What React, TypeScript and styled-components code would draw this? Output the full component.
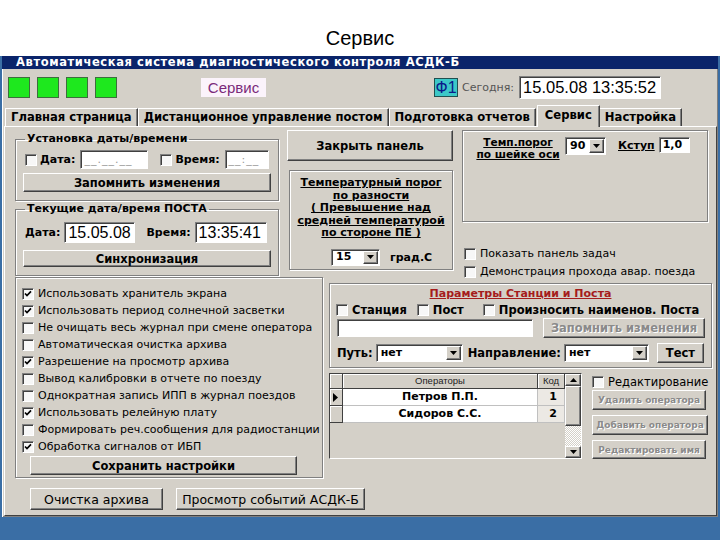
import React from 'react';
import styled, { createGlobalStyle, css } from 'styled-components';

const GlobalStyle = createGlobalStyle`
  html, body { margin: 0; padding: 0; background: #fff; }
  body { font-family: "DejaVu Sans", Verdana, sans-serif; }
  * { box-sizing: border-box; }
`;

const face = '#d4d0c8';

const raised = css`
  border: 1px solid;
  border-color: #ffffff #404040 #404040 #ffffff;
  box-shadow: inset -1px -1px 0 #808080;
`;

const sunken = css`
  border: 1px solid;
  border-color: #808080 #ffffff #ffffff #808080;
  box-shadow: inset 1px 1px 0 #404040;
`;

const etched = css`
  border: 1px solid #808080;
  box-shadow: inset 1px 1px 0 #ffffff, 1px 1px 0 #ffffff;
`;

const Page = styled.div`
  width: 720px;
  height: 540px;
  overflow: hidden;
  display: flex;
  flex-direction: column;
`;

const SlideTitle = styled.h1`
  margin: 0;
  height: 56px;
  padding-top: 27px;
  text-align: center;
  font: 400 20px/22px "Liberation Sans", Arial, sans-serif;
  color: #000;
`;

const Desktop = styled.div`
  flex: 1;
  background: #3a6ea5;
  padding: 0 2px;
`;

const Window = styled.div`
  height: 461px;
  background: ${face};
  display: flex;
  flex-direction: column;
  box-shadow: inset 1px 0 0 #ffffff, inset -1px -1px 0 #808080;
`;

const TitleBar = styled.div`
  height: 13px;
  background: #0a246a;
  color: #fff;
  font-weight: bold;
  font-size: 11.5px;
  letter-spacing: 0.6px;
  line-height: 13px;
  padding-left: 14px;
  white-space: nowrap;
  overflow: hidden;
`;

const Toolbar = styled.div`
  height: 37px;
  display: flex;
  align-items: center;
  padding-left: 6px;
`;

const Lamp = styled.div`
  width: 22px;
  height: 21px;
  margin-right: 7px;
  background: #1ee81e;
  border: 1px solid #3d6e3d;
`;

const ModeLabel = styled.div`
  margin-left: 77px;
  width: 65px;
  height: 19px;
  background: #fbf3fb;
  color: #7a2a7a;
  font: 15px/19px "Liberation Sans", Arial, sans-serif;
  text-align: center;
`;

const FKey = styled.div`
  margin-left: 168px;
  width: 24px;
  height: 19px;
  background: #3cc8c8;
  border: 1px solid #205050;
  color: #0a1a8a;
  font: 16px/17px "Liberation Sans", Arial, sans-serif;
  text-align: center;
`;

const TodayLabel = styled.span`
  margin-left: 4px;
  color: #555;
  font-size: 11px;
`;

const Clock = styled.div`
  margin-left: 5px;
  width: 142px;
  height: 23px;
  background: #fff;
  ${sunken};
  font: 16.5px/21px "Liberation Sans", Arial, sans-serif;
  padding-left: 3px;
`;

const TabStrip = styled.div`
  height: 20px;
  display: flex;
  align-items: flex-end;
  padding-left: 3px;
`;

const Tab = styled.div<{ $active?: boolean }>`
  height: 18px;
  padding: 0 5px;
  font-weight: bold;
  font-size: 11.6px;
  line-height: 17px;
  white-space: nowrap;
  background: ${face};
  border-top: 1px solid #fff;
  border-left: 1px solid #fff;
  border-right: 1px solid #404040;
  box-shadow: inset -1px 0 0 #808080;
  position: relative;
  ${p => p.$active && css`
    margin: 0 -1px -1px 1px;
    padding: 1px 7px 0;
    z-index: 1;
    height: 22px;
  `}
`;

const TabPanel = styled.div`
  flex: 1;
  margin: 0 1px 1px 2px;
  border: 1px solid;
  border-color: #ffffff #404040 #404040 #ffffff;
  padding: 3px 0 0 10px;
  display: flex;
  flex-direction: column;
`;

const Row = styled.div<{ $h?: number; $mt?: number }>`
  display: flex;
  ${p => p.$h && `height: ${p.$h}px;`}
  margin-top: ${p => p.$mt || 0}px;
`;

const Column = styled.div<{ $w: number; $ml?: number; $mt?: number }>`
  width: ${p => p.$w}px;
  margin-left: ${p => p.$ml || 0}px;
  margin-top: ${p => p.$mt || 0}px;
  display: flex;
  flex-direction: column;
  flex-shrink: 0;
`;

const Group = styled.fieldset<{ $mt: number }>`
  margin: ${p => p.$mt}px 0 0 0;
  min-width: 0;
  padding: 2px 7px 8px;
  ${etched};
`;

const Legend = styled.legend`
  padding: 0 2px;
  margin-left: 2px;
  font-weight: bold;
  font-size: 11px;
  line-height: 12px;
`;

const FieldRow = styled.div<{ $h: number; $mt: number }>`
  display: flex;
  align-items: center;
  height: ${p => p.$h}px;
  margin-top: ${p => p.$mt}px;
`;

const Label = styled.span<{ $ml?: number; $u?: boolean; $size?: number; $mt?: number }>`
  margin-left: ${p => p.$ml || 0}px;
  margin-top: ${p => p.$mt || 0}px;
  font-weight: bold;
  font-size: ${p => p.$size || 11}px;
  white-space: nowrap;
  ${p => p.$u && 'text-decoration: underline;'}
`;

const Field = styled.div<{ $w: number; $h: number; $ml?: number; $big?: boolean }>`
  width: ${p => p.$w}px;
  height: ${p => p.$h}px;
  margin-left: ${p => p.$ml || 0}px;
  flex-shrink: 0;
  background: #fff;
  ${sunken};
  padding-left: 3px;
  white-space: nowrap;
  overflow: hidden;
  ${p => p.$big
    ? css`font: 16px/${p.$h - 2}px "Liberation Sans", Arial, sans-serif;`
    : css`font-weight: bold; font-size: 11px; line-height: ${p.$h - 2}px;`}
`;

const Mask = styled.span`
  color: #9a9a9a;
  font-weight: normal;
  letter-spacing: 1px;
`;

const Btn = styled.div<{ $w?: number; $h: number; $mt?: number; $ml?: number; $disabled?: boolean; $size?: number; $plain?: boolean }>`
  ${p => (p.$w ? `width: ${p.$w}px;` : '')}
  height: ${p => p.$h}px;
  margin-top: ${p => p.$mt || 0}px;
  margin-left: ${p => p.$ml || 0}px;
  flex-shrink: 0;
  background: ${face};
  ${raised};
  display: flex;
  align-items: center;
  justify-content: center;
  font-weight: ${p => (p.$plain ? 'normal' : 'bold')};
  font-size: ${p => p.$size || 11.5}px;
  white-space: nowrap;
  color: ${p => (p.$disabled ? '#8a8a8a' : '#000')};
  ${p => p.$disabled && 'text-shadow: 1px 1px 0 #fff;'}
`;

const CheckBox = styled.span<{ $ml?: number }>`
  width: 12px;
  height: 12px;
  flex-shrink: 0;
  margin-left: ${p => p.$ml || 0}px;
  background: #f7f7f7;
  ${sunken};
  display: flex;
  align-items: center;
  justify-content: center;
`;

const Check: React.FC<{ checked?: boolean; ml?: number }> = ({ checked, ml }) => (
  <CheckBox $ml={ml}>
    {checked && (
      <svg width="8" height="8" viewBox="0 0 8 8">
        <path d="M1 3.5 L3 5.6 L7 1.4" fill="none" stroke="#000" strokeWidth="1.7" />
      </svg>
    )}
  </CheckBox>
);

const CheckText = styled.span<{ $bold?: boolean; $size?: number }>`
  margin-left: 4px;
  font-size: ${p => p.$size || 11}px;
  font-weight: ${p => (p.$bold ? 'bold' : 'normal')};
  white-space: nowrap;
`;

const ComboBox = styled.div<{ $w: number; $h: number; $ml?: number }>`
  width: ${p => p.$w}px;
  height: ${p => p.$h}px;
  margin-left: ${p => p.$ml || 0}px;
  flex-shrink: 0;
  background: #fff;
  ${sunken};
  display: flex;
  padding: 1px;
`;

const ComboText = styled.span`
  flex: 1;
  padding-left: 3px;
  font-weight: bold;
  font-size: 11px;
  line-height: 14px;
  display: flex;
  align-items: center;
`;

const DropBtn = styled.span`
  width: 15px;
  background: ${face};
  ${raised};
  display: flex;
  align-items: center;
  justify-content: center;
`;

const Combo: React.FC<{ value: string; w: number; h: number; ml?: number }> = ({ value, w, h, ml }) => (
  <ComboBox $w={w} $h={h} $ml={ml}>
    <ComboText>{value}</ComboText>
    <DropBtn>
      <svg width="7" height="4" viewBox="0 0 7 4"><path d="M0 0h7L3.5 4z" fill="#000" /></svg>
    </DropBtn>
  </ComboBox>
);

const Etched = styled.div<{ $w?: number; $h: number; $mt?: number; $ml?: number }>`
  ${p => (p.$w ? `width: ${p.$w}px;` : '')}
  height: ${p => p.$h}px;
  margin-top: ${p => p.$mt || 0}px;
  margin-left: ${p => p.$ml || 0}px;
  flex-shrink: 0;
  ${etched};
`;

const PorogText = styled.div`
  padding-top: 6px;
  text-align: center;
  font-weight: bold;
  font-size: 11px;
  line-height: 12.6px;
  text-decoration: underline;
`;

const ComboLine = styled.div`
  display: flex;
  align-items: center;
  margin-top: 9px;
  padding-left: 41px;
`;

const AxleRow = styled.div`
  display: flex;
  align-items: flex-start;
  padding: 6px 0 0 13px;
`;

const AxleText = styled.div`
  width: 84px;
  text-align: center;
  font-weight: bold;
  font-size: 10.6px;
  line-height: 11.5px;
  white-space: nowrap;
  text-decoration: underline;
`;

const CheckLine = styled.div<{ $h: number; $mt?: number; $pl?: number }>`
  display: flex;
  align-items: center;
  height: ${p => p.$h}px;
  margin-top: ${p => p.$mt || 0}px;
  padding-left: ${p => p.$pl || 0}px;
`;

const OptionsPanel = styled.div`
  width: 308px;
  height: 201px;
  ${etched};
  padding: 7px 0 0 6px;
  flex-shrink: 0;
`;

const ParamTitle = styled.div`
  margin-top: 3px;
  height: 13px;
  text-align: center;
  color: #a51c1c;
  font-weight: bold;
  font-size: 11px;
  line-height: 13px;
  text-decoration: underline;
`;

const ParamRow = styled.div<{ $mt: number; $h: number }>`
  display: flex;
  align-items: center;
  margin-top: ${p => p.$mt}px;
  height: ${p => p.$h}px;
  padding-left: 6px;
`;

const GridFrame = styled.div`
  width: 253px;
  height: 86px;
  border: 1px solid;
  border-color: #404040 #ffffff #ffffff #404040;
  display: flex;
  flex-shrink: 0;
`;

const Table = styled.div`
  width: 235px;
  display: grid;
  grid-template-columns: 13px 195px 27px;
  grid-template-rows: 15px 17px 17px;
  align-content: start;
`;

const HeadCell = styled.div`
  background: ${face};
  border-right: 1px solid #404040;
  border-bottom: 1px solid #404040;
  box-shadow: inset 1px 1px 0 #fff;
  font: 9.5px/14px "Liberation Sans", Arial, sans-serif;
  text-align: center;
  color: #222;
`;

const IndCell = styled.div`
  background: ${face};
  border-right: 1px solid #404040;
  border-bottom: 1px solid #404040;
  box-shadow: inset 1px 1px 0 #fff;
  display: flex;
  align-items: center;
  padding-left: 3px;
`;

const DataCell = styled.div<{ $right?: boolean; $gray?: boolean }>`
  background: ${p => (p.$gray ? '#ece9e4' : '#fff')};
  border-right: 1px solid #c0c0c0;
  border-bottom: 1px solid #c0c0c0;
  font-weight: bold;
  font-size: 11px;
  line-height: 16px;
  text-align: ${p => (p.$right ? 'right' : 'center')};
  padding-right: ${p => (p.$right ? 7 : 0)}px;
`;

const ScrollBar = styled.div`
  width: 16px;
  display: flex;
  flex-direction: column;
`;

const ScrollBtn = styled.div`
  height: 12px;
  background: ${face};
  ${raised};
  display: flex;
  align-items: center;
  justify-content: center;
`;

const Thumb = styled.div`
  height: 40px;
  background: ${face};
  ${raised};
`;

const Track = styled.div`
  flex: 1;
  background-color: ${face};
  background-image: conic-gradient(#fff 25%, ${face} 0 50%, #fff 0 75%, ${face} 0);
  background-size: 2px 2px;
`;

const BottomBar = styled.div`
  display: flex;
  margin: 10px 0 0 15px;
`;

const lamps = [0, 1, 2, 3];

const tabs = ['Главная страница', 'Дистанционное управление постом', 'Подготовка отчетов', 'Сервис', 'Настройка'];

const options: [string, boolean][] = [
  ['Использовать хранитель экрана', true],
  ['Использовать период солнечной засветки', true],
  ['Не очищать весь журнал при смене оператора', false],
  ['Автоматическая очистка архива', false],
  ['Разрешение на просмотр архива', true],
  ['Вывод калибровки в отчете по поезду', false],
  ['Однократная запись ИПП в журнал поездов', false],
  ['Использовать релейную плату', true],
  ['Формировать реч.сообщения для радиостанции', false],
  ['Обработка сигналов от ИБП', true],
];

const operators = [
  { name: 'Петров П.П.', code: 1 },
  { name: 'Сидоров С.С.', code: 2 },
];

export default function App() {
  return (
    <Page>
      <GlobalStyle />
      <SlideTitle>Сервис</SlideTitle>
      <Desktop>
        <Window>
          <TitleBar>Автоматическая система диагностического контроля АСДК-Б</TitleBar>
          <Toolbar>
            {lamps.map(i => <Lamp key={i} />)}
            <ModeLabel>Сервис</ModeLabel>
            <FKey>Ф1</FKey>
            <TodayLabel>Сегодня:</TodayLabel>
            <Clock>15.05.08 13:35:52</Clock>
          </Toolbar>
          <TabStrip>
            {tabs.map(t => <Tab key={t} $active={t === 'Сервис'}>{t}</Tab>)}
          </TabStrip>
          <TabPanel>
            <Row $h={147}>
              <Column $w={264}>
                <Group $mt={3}>
                  <Legend>Установка даты/времени</Legend>
                  <FieldRow $h={19} $mt={3}>
                    <Check ml={2} />
                    <Label $ml={3}>Дата:</Label>
                    <Field $w={68} $h={19} $ml={5}><Mask>__.__.__</Mask></Field>
                    <Check ml={12} />
                    <Label $ml={3}>Время:</Label>
                    <Field $w={44} $h={19} $ml={5}><Mask>__:__</Mask></Field>
                  </FieldRow>
                  <Btn $h={19} $mt={4}>Запомнить изменения</Btn>
                </Group>
                <Group $mt={2}>
                  <Legend>Текущие дата/время ПОСТА</Legend>
                  <FieldRow $h={21} $mt={5}>
                    <Label $ml={2}>Дата:</Label>
                    <Field $w={71} $h={21} $ml={4} $big>15.05.08</Field>
                    <Label $ml={11}>Время:</Label>
                    <Field $w={72} $h={21} $ml={4} $big>13:35:41</Field>
                  </FieldRow>
                  <Btn $h={17} $mt={7}>Синхронизация</Btn>
                </Group>
              </Column>
              <Column $w={166} $ml={8}>
                <Btn $h={31}>Закрыть панель</Btn>
                <Etched $w={164} $h={100} $mt={9} $ml={2}>
                  <PorogText>
                    Температурный порог<br />
                    по разности<br />
                    ( Превышение над<br />
                    средней температурой<br />
                    по стороне ПЕ )
                  </PorogText>
                  <ComboLine>
                    <Combo value="15" w={49} h={17} />
                    <Label $ml={10}>град.С</Label>
                  </ComboLine>
                </Etched>
              </Column>
              <Column $w={246} $ml={9}>
                <Etched $h={92}>
                  <AxleRow>
                    <AxleText>Темп.порог<br />по шейке оси</AxleText>
                    <Combo value="90" w={41} h={18} ml={5} />
                    <Label $ml={12} $u $mt={2}>Кступ</Label>
                    <Field $w={31} $h={16} $ml={4}>1,0</Field>
                  </AxleRow>
                </Etched>
                <CheckLine $h={13} $mt={25} $pl={2}>
                  <Check />
                  <CheckText>Показать панель задач</CheckText>
                </CheckLine>
                <CheckLine $h={13} $mt={5} $pl={2}>
                  <Check />
                  <CheckText>Демонстрация прохода авар. поезда</CheckText>
                </CheckLine>
              </Column>
            </Row>
            <Row>
              <OptionsPanel>
                {options.map(([text, on]) => (
                  <CheckLine key={text} $h={17}>
                    <Check checked={on} />
                    <CheckText>{text}</CheckText>
                  </CheckLine>
                ))}
                <Btn $w={267} $h={19} $ml={8} $mt={1}>Сохранить настройки</Btn>
              </OptionsPanel>
              <Column $w={383} $ml={6}>
                <Etched $h={85} $mt={6}>
                  <ParamTitle>Параметры Станции и Поста</ParamTitle>
                  <ParamRow $mt={3} $h={13}>
                    <Check />
                    <CheckText $bold $size={11.5}>Станция</CheckText>
                    <Check ml={10} />
                    <CheckText $bold $size={11.5}>Пост</CheckText>
                    <Check ml={19} />
                    <CheckText $bold $size={11.5}>Произносить наименов. Поста</CheckText>
                  </ParamRow>
                  <ParamRow $mt={2} $h={20}>
                    <Field $w={196} $h={18} $ml={1} />
                    <Btn $w={162} $h={20} $ml={10} $disabled>Запомнить изменения</Btn>
                  </ParamRow>
                  <ParamRow $mt={5} $h={20}>
                    <Label $ml={1} $size={11.5}>Путь:</Label>
                    <Combo value="нет" w={87} h={18} ml={3} />
                    <Label $ml={5} $size={11.5}>Направление:</Label>
                    <Combo value="нет" w={85} h={18} ml={3} />
                    <Btn $w={47} $h={20} $ml={8}>Тест</Btn>
                  </ParamRow>
                </Etched>
                <Row $mt={5}>
                  <GridFrame>
                    <Table>
                      <HeadCell />
                      <HeadCell>Операторы</HeadCell>
                      <HeadCell>Код</HeadCell>
                      {operators.map((op, i) => (
                        <React.Fragment key={op.name}>
                          <IndCell>
                            {i === 0 && (
                              <svg width="5" height="9" viewBox="0 0 5 9"><path d="M0 0L5 4.5L0 9z" fill="#000" /></svg>
                            )}
                          </IndCell>
                          <DataCell>{op.name}</DataCell>
                          <DataCell $right $gray>{op.code}</DataCell>
                        </React.Fragment>
                      ))}
                    </Table>
                    <ScrollBar>
                      <ScrollBtn>
                        <svg width="7" height="4" viewBox="0 0 7 4"><path d="M0 4h7L3.5 0z" fill="#000" /></svg>
                      </ScrollBtn>
                      <Thumb />
                      <Track />
                      <ScrollBtn>
                        <svg width="7" height="4" viewBox="0 0 7 4"><path d="M0 0h7L3.5 4z" fill="#000" /></svg>
                      </ScrollBtn>
                    </ScrollBar>
                  </GridFrame>
                  <Column $w={116} $ml={10}>
                    <CheckLine $h={13} $mt={2}>
                      <Check />
                      <CheckText $size={11.5}>Редактирование</CheckText>
                    </CheckLine>
                    <Btn $w={114} $h={20} $mt={2} $size={9} $disabled>Удалить оператора</Btn>
                    <Btn $w={116} $h={20} $mt={5} $size={9} $disabled>Добавить оператора</Btn>
                    <Btn $w={114} $h={19} $mt={5} $size={9} $disabled>Редактировать имя</Btn>
                  </Column>
                </Row>
              </Column>
            </Row>
            <BottomBar>
              <Btn $w={133} $h={22} $plain $size={12.5}>Очистка архива</Btn>
              <Btn $w={189} $h={22} $ml={13} $plain $size={12.5}>Просмотр событий АСДК-Б</Btn>
            </BottomBar>
          </TabPanel>
        </Window>
      </Desktop>
    </Page>
  );
}
